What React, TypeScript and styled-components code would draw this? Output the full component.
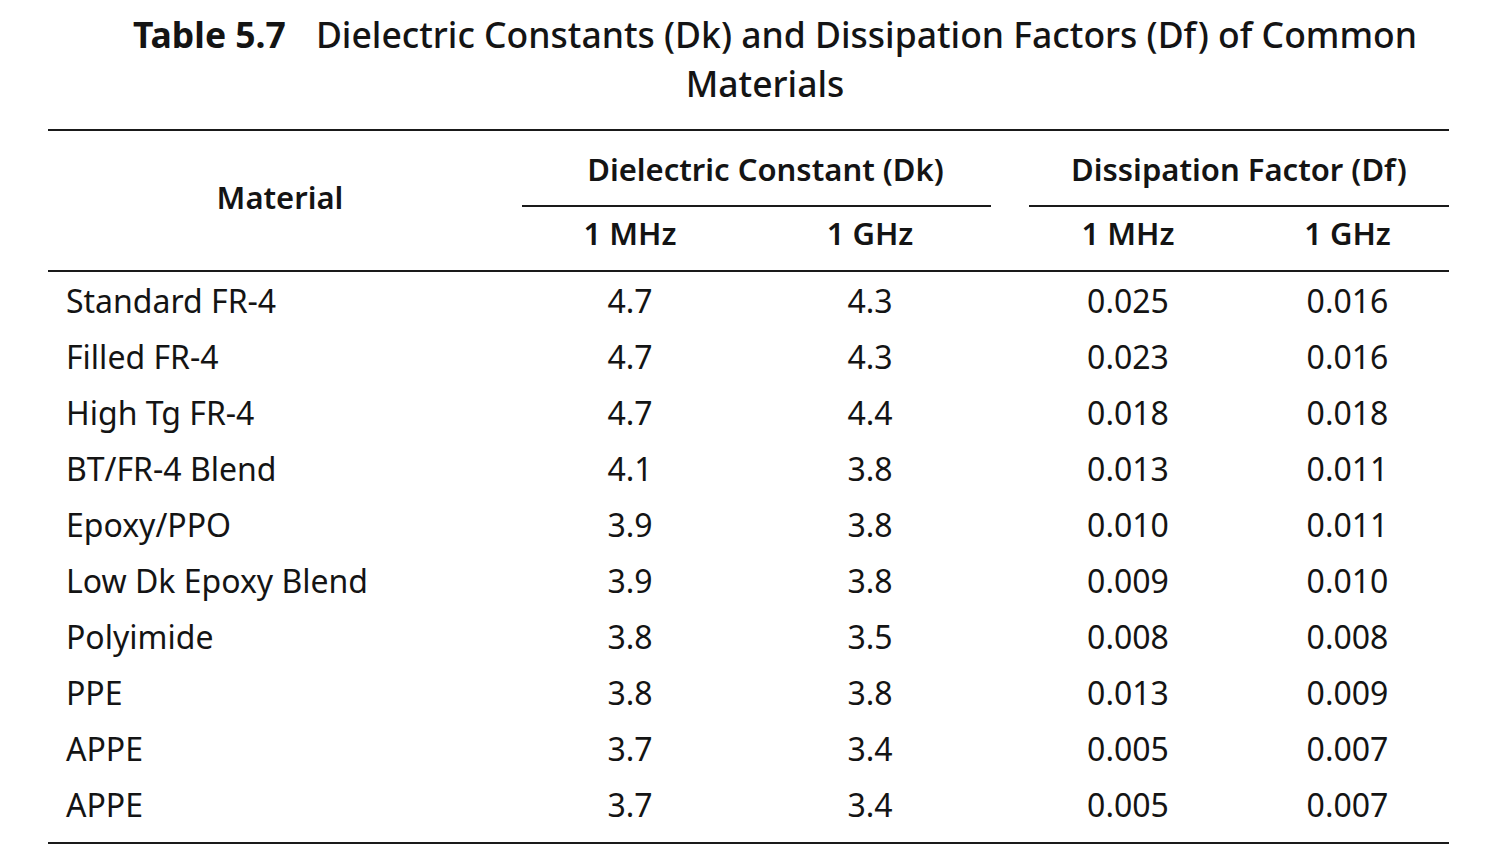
import styled, { createGlobalStyle } from 'styled-components';

const GlobalStyle = createGlobalStyle`
  body {
    margin: 0;
    background: #ffffff;
    font-family: "Noto Sans", "Open Sans", sans-serif;
    color: #141414;
  }
`;

const COLS = '464px 236px 244px 272px 185px';

const Page = styled.div`
  padding: 10px 57px 0 48px;
  width: 1401px;
`;

const Title = styled.h1`
  margin: 0 0 21px 0;
  text-align: center;
  font-size: 35.5px;
  line-height: 49px;
  font-weight: 500;
`;

const TitleLine = styled.div<{ $shift: number }>`
  white-space: nowrap;
  padding-left: ${({ $shift }) => $shift}px;
`;

const TitleNum = styled.span`
  font-weight: 700;
  margin-right: 30px;
`;

const Head = styled.div`
  display: grid;
  grid-template-columns: ${COLS};
  border-top: 2px solid #1a1a1a;
  border-bottom: 2px solid #1a1a1a;
  font-weight: 600;
  font-size: 31px;
`;

const MaterialHead = styled.div`
  grid-row: span 2;
  display: flex;
  align-items: center;
  justify-content: center;
  padding-bottom: 7px;
`;

const Group = styled.div<{ $left: number; $right: number }>`
  grid-column: span 2;
  display: flex;
  flex-direction: column;
  padding: 0 ${({ $right }) => $right}px 0 ${({ $left }) => $left}px;
`;

const GroupLabel = styled.div<{ $shift: number }>`
  height: 74px;
  display: flex;
  align-items: center;
  justify-content: center;
  padding-top: 2px;
  padding-left: ${({ $shift }) => $shift}px;
  box-sizing: border-box;
  white-space: nowrap;
`;

const GroupRule = styled.div`
  height: 2px;
  background: #1a1a1a;
`;

const SubHead = styled.div<{ $last?: boolean }>`
  height: 63px;
  display: flex;
  align-items: center;
  justify-content: center;
  padding-right: ${({ $last }) => ($last ? 18 : 0)}px;
  padding-bottom: 12px;
  box-sizing: border-box;
`;

const Body = styled.div`
  padding-bottom: 10px;
  border-bottom: 2px solid #1a1a1a;
`;

const Row = styled.div`
  display: grid;
  grid-template-columns: ${COLS};
  height: 56px;
  align-items: center;
  font-size: 32px;
`;

const NameCell = styled.div`
  padding-left: 18px;
  white-space: nowrap;
`;

const NumCell = styled.div<{ $last?: boolean }>`
  text-align: center;
  padding-right: ${({ $last }) => ($last ? 18 : 0)}px;
`;

const rows: [string, string, string, string, string][] = [
  ['Standard FR-4', '4.7', '4.3', '0.025', '0.016'],
  ['Filled FR-4', '4.7', '4.3', '0.023', '0.016'],
  ['High Tg FR-4', '4.7', '4.4', '0.018', '0.018'],
  ['BT/FR-4 Blend', '4.1', '3.8', '0.013', '0.011'],
  ['Epoxy/PPO', '3.9', '3.8', '0.010', '0.011'],
  ['Low Dk Epoxy Blend', '3.9', '3.8', '0.009', '0.010'],
  ['Polyimide', '3.8', '3.5', '0.008', '0.008'],
  ['PPE', '3.8', '3.8', '0.013', '0.009'],
  ['APPE', '3.7', '3.4', '0.005', '0.007'],
  ['APPE', '3.7', '3.4', '0.005', '0.007'],
];

export default function App() {
  return (
    <Page>
      <GlobalStyle />
      <Title>
        <TitleLine $shift={53}>
          <TitleNum>Table 5.7</TitleNum>
          Dielectric Constants (Dk) and Dissipation Factors (Df) of Common
        </TitleLine>
        <TitleLine $shift={33}>Materials</TitleLine>
      </Title>

      <Head>
        <MaterialHead>Material</MaterialHead>
        <Group $left={10} $right={1}>
          <GroupLabel $shift={18}>Dielectric Constant (Dk)</GroupLabel>
          <GroupRule />
        </Group>
        <Group $left={37} $right={0}>
          <GroupLabel $shift={0}>Dissipation Factor (Df)</GroupLabel>
          <GroupRule />
        </Group>
        <SubHead>1 MHz</SubHead>
        <SubHead>1 GHz</SubHead>
        <SubHead>1 MHz</SubHead>
        <SubHead $last>1 GHz</SubHead>
      </Head>

      <Body>
        {rows.map((r, i) => (
          <Row key={i}>
            <NameCell>{r[0]}</NameCell>
            <NumCell>{r[1]}</NumCell>
            <NumCell>{r[2]}</NumCell>
            <NumCell>{r[3]}</NumCell>
            <NumCell $last>{r[4]}</NumCell>
          </Row>
        ))}
      </Body>
    </Page>
  );
}
